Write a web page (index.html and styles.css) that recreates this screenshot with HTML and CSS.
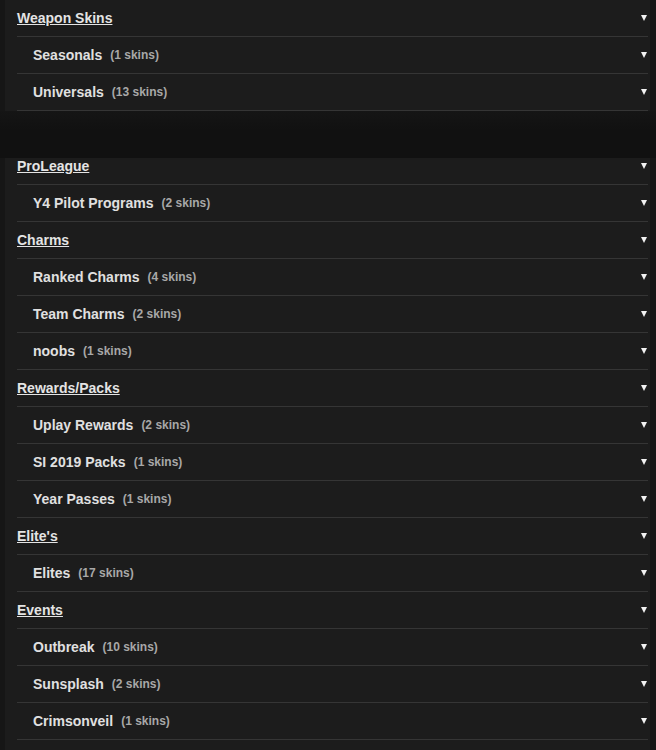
FILE: index.html
```html
<!DOCTYPE html>
<html lang="en">
<head>
  <meta charset="UTF-8" />
  <meta name="viewport" content="width=device-width, initial-scale=1.0"/>
  <title>Skins</title>
  <link rel="stylesheet" href="styles.css">
</head>
<body>
  <div class="panel">
    <ul class="skin-list">
      <li class="row group"><a href="#">Weapon Skins</a><span class="arrow"></span></li>
      <li class="row item"><span class="name">Seasonals</span><span class="count">(1 skins)</span><span class="arrow"></span></li>
      <li class="row item"><span class="name">Universals</span><span class="count">(13 skins)</span><span class="arrow"></span></li>
    </ul>

    <div class="shade"></div>

    <ul class="skin-list">
      <li class="row group"><a href="#">ProLeague</a><span class="arrow"></span></li>
      <li class="row item"><span class="name">Y4 Pilot Programs</span><span class="count">(2 skins)</span><span class="arrow"></span></li>
      <li class="row group"><a href="#">Charms</a><span class="arrow"></span></li>
      <li class="row item"><span class="name">Ranked Charms</span><span class="count">(4 skins)</span><span class="arrow"></span></li>
      <li class="row item"><span class="name">Team Charms</span><span class="count">(2 skins)</span><span class="arrow"></span></li>
      <li class="row item"><span class="name">noobs</span><span class="count">(1 skins)</span><span class="arrow"></span></li>
      <li class="row group"><a href="#">Rewards/Packs</a><span class="arrow"></span></li>
      <li class="row item"><span class="name">Uplay Rewards</span><span class="count">(2 skins)</span><span class="arrow"></span></li>
      <li class="row item"><span class="name">SI 2019 Packs</span><span class="count">(1 skins)</span><span class="arrow"></span></li>
      <li class="row item"><span class="name">Year Passes</span><span class="count">(1 skins)</span><span class="arrow"></span></li>
      <li class="row group"><a href="#">Elite's</a><span class="arrow"></span></li>
      <li class="row item"><span class="name">Elites</span><span class="count">(17 skins)</span><span class="arrow"></span></li>
      <li class="row group"><a href="#">Events</a><span class="arrow"></span></li>
      <li class="row item"><span class="name">Outbreak</span><span class="count">(10 skins)</span><span class="arrow"></span></li>
      <li class="row item"><span class="name">Sunsplash</span><span class="count">(2 skins)</span><span class="arrow"></span></li>
      <li class="row item"><span class="name">Crimsonveil</span><span class="count">(1 skins)</span><span class="arrow"></span></li>
    </ul>
  </div>
</body>
</html>
```

FILE: styles.css
```css
* {
  box-sizing: border-box;
}

body {
  margin: 0;
  background: #161616;
  font-family: 'Liberation Sans', Arial, sans-serif;
  color: #e2e2e2;
  overflow: hidden;
}

.panel {
  margin-left: 5px;
  width: 645px;
  background: #1c1c1c;
  padding: 0 2px 0 12px;
  min-height: 100vh;
}

.skin-list {
  list-style: none;
  margin: 0;
  padding: 0;
}

.row {
  display: flex;
  align-items: center;
  height: 37px;
  border-bottom: 1px solid #353535;
  font-weight: bold;
  padding-right: 1px;
}

.group a {
  color: #e4e4e4;
  font-size: 14px;
  text-decoration: underline;
}

.item {
  padding-left: 16px;
}

.name {
  font-size: 14px;
  color: #e0e0e0;
}

.count {
  font-size: 12px;
  color: #a8a8a8;
  margin-left: 8px;
}

.arrow {
  margin-left: auto;
  width: 0;
  height: 0;
  border-left: 3.5px solid transparent;
  border-right: 3.5px solid transparent;
  border-top: 6px solid #f2f2f2;
}

.shade {
  position: relative;
  z-index: 1;
  height: 47px;
  margin: 0 -2px -10px -17px;
  width: 656px;
  background: linear-gradient(to bottom, #151515 0%, #111111 40%, #111111 100%);
}
```
